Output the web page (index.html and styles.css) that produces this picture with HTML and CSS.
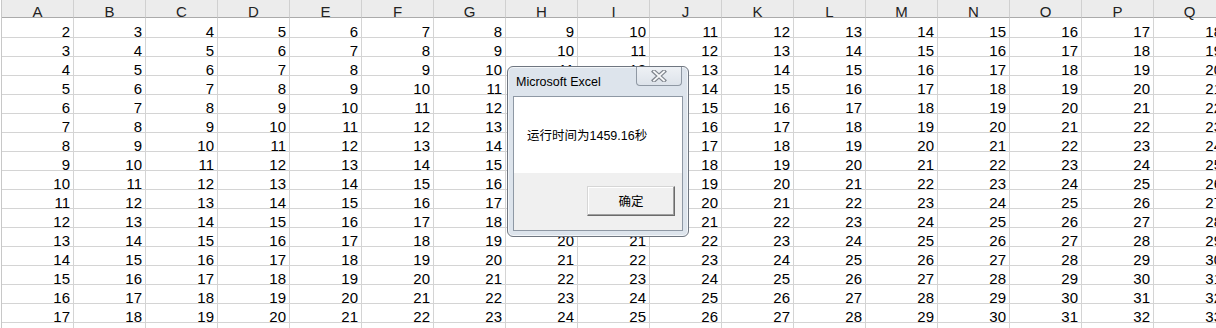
FILE: index.html
```html
<!DOCTYPE html>
<html lang="zh">
<head>
<meta charset="utf-8">
<title>Excel</title>
<link rel="stylesheet" href="styles.css">
</head>
<body>
<div class="sheet">
  <div class="row head"><span>A</span><span>B</span><span>C</span><span>D</span><span>E</span><span>F</span><span>G</span><span>H</span><span>I</span><span>J</span><span>K</span><span>L</span><span>M</span><span>N</span><span>O</span><span>P</span><span>Q</span></div>
  <div class="row first"><span>2</span><span>3</span><span>4</span><span>5</span><span>6</span><span>7</span><span>8</span><span>9</span><span>10</span><span>11</span><span>12</span><span>13</span><span>14</span><span>15</span><span>16</span><span>17</span><span>18</span></div>
  <div class="row"><span>3</span><span>4</span><span>5</span><span>6</span><span>7</span><span>8</span><span>9</span><span>10</span><span>11</span><span>12</span><span>13</span><span>14</span><span>15</span><span>16</span><span>17</span><span>18</span><span>19</span></div>
  <div class="row"><span>4</span><span>5</span><span>6</span><span>7</span><span>8</span><span>9</span><span>10</span><span>11</span><span>12</span><span>13</span><span>14</span><span>15</span><span>16</span><span>17</span><span>18</span><span>19</span><span>20</span></div>
  <div class="row"><span>5</span><span>6</span><span>7</span><span>8</span><span>9</span><span>10</span><span>11</span><span>12</span><span>13</span><span>14</span><span>15</span><span>16</span><span>17</span><span>18</span><span>19</span><span>20</span><span>21</span></div>
  <div class="row"><span>6</span><span>7</span><span>8</span><span>9</span><span>10</span><span>11</span><span>12</span><span>13</span><span>14</span><span>15</span><span>16</span><span>17</span><span>18</span><span>19</span><span>20</span><span>21</span><span>22</span></div>
  <div class="row"><span>7</span><span>8</span><span>9</span><span>10</span><span>11</span><span>12</span><span>13</span><span>14</span><span>15</span><span>16</span><span>17</span><span>18</span><span>19</span><span>20</span><span>21</span><span>22</span><span>23</span></div>
  <div class="row"><span>8</span><span>9</span><span>10</span><span>11</span><span>12</span><span>13</span><span>14</span><span>15</span><span>16</span><span>17</span><span>18</span><span>19</span><span>20</span><span>21</span><span>22</span><span>23</span><span>24</span></div>
  <div class="row"><span>9</span><span>10</span><span>11</span><span>12</span><span>13</span><span>14</span><span>15</span><span>16</span><span>17</span><span>18</span><span>19</span><span>20</span><span>21</span><span>22</span><span>23</span><span>24</span><span>25</span></div>
  <div class="row"><span>10</span><span>11</span><span>12</span><span>13</span><span>14</span><span>15</span><span>16</span><span>17</span><span>18</span><span>19</span><span>20</span><span>21</span><span>22</span><span>23</span><span>24</span><span>25</span><span>26</span></div>
  <div class="row"><span>11</span><span>12</span><span>13</span><span>14</span><span>15</span><span>16</span><span>17</span><span>18</span><span>19</span><span>20</span><span>21</span><span>22</span><span>23</span><span>24</span><span>25</span><span>26</span><span>27</span></div>
  <div class="row"><span>12</span><span>13</span><span>14</span><span>15</span><span>16</span><span>17</span><span>18</span><span>19</span><span>20</span><span>21</span><span>22</span><span>23</span><span>24</span><span>25</span><span>26</span><span>27</span><span>28</span></div>
  <div class="row"><span>13</span><span>14</span><span>15</span><span>16</span><span>17</span><span>18</span><span>19</span><span>20</span><span>21</span><span>22</span><span>23</span><span>24</span><span>25</span><span>26</span><span>27</span><span>28</span><span>29</span></div>
  <div class="row"><span>14</span><span>15</span><span>16</span><span>17</span><span>18</span><span>19</span><span>20</span><span>21</span><span>22</span><span>23</span><span>24</span><span>25</span><span>26</span><span>27</span><span>28</span><span>29</span><span>30</span></div>
  <div class="row"><span>15</span><span>16</span><span>17</span><span>18</span><span>19</span><span>20</span><span>21</span><span>22</span><span>23</span><span>24</span><span>25</span><span>26</span><span>27</span><span>28</span><span>29</span><span>30</span><span>31</span></div>
  <div class="row"><span>16</span><span>17</span><span>18</span><span>19</span><span>20</span><span>21</span><span>22</span><span>23</span><span>24</span><span>25</span><span>26</span><span>27</span><span>28</span><span>29</span><span>30</span><span>31</span><span>32</span></div>
  <div class="row"><span>17</span><span>18</span><span>19</span><span>20</span><span>21</span><span>22</span><span>23</span><span>24</span><span>25</span><span>26</span><span>27</span><span>28</span><span>29</span><span>30</span><span>31</span><span>32</span><span>33</span></div>
  <div class="row"><span></span><span></span><span></span><span></span><span></span><span></span><span></span><span></span><span></span><span></span><span></span><span></span><span></span><span></span><span></span><span></span><span></span></div>
</div>

<div class="dlg">
  <div class="titlebar">
    <span class="title">Microsoft Excel</span>
    <span class="close"><svg width="16" height="12" viewBox="0 0 16 12"><path d="M3 1.5 L13 10.5 M13 1.5 L3 10.5" stroke="#80868e" stroke-width="4.2" stroke-linecap="square" fill="none"/><path d="M3 1.5 L13 10.5 M13 1.5 L3 10.5" stroke="#f7f8f9" stroke-width="1.8" stroke-linecap="square" fill="none"/></svg></span>
  </div>
  <div class="client">
    <div class="msg">运行时间为1459.16秒</div>
    <div class="footer"><span class="ok">确定</span></div>
  </div>
</div>
</body>
</html>
```

FILE: styles.css
```css
* { box-sizing: border-box; margin: 0; padding: 0; }

body {
  width: 1216px;
  height: 328px;
  overflow: hidden;
  background: #ffffff;
  font-family: "Liberation Sans", Arial, sans-serif;
  position: relative;
}

.sheet {
  margin-left: 1px;
  width: 1225px;
  border-left: 1px solid #c8c8c8;
}

.row {
  display: grid;
  grid-template-columns: repeat(17, 72px);
}

.row span {
  height: 19px;
  border-right: 1px solid #d4d4d4;
  border-bottom: 1px solid #d4d4d4;
  text-align: right;
  padding-right: 3px;
  font-size: 15px;
  line-height: 26px;
  color: #000;
  white-space: nowrap;
  overflow: visible;
}

.row.first span {
  height: 20px;
  line-height: 28px;
}

.row.head span {
  height: 18px;
  background: #ececec;
  border-right: 1px solid #d0d0d0;
  border-bottom: 1px solid #ababab;
  text-align: center;
  padding-right: 0;
  line-height: 24px;
  color: #222;
}

/* dialog */
.dlg {
  position: absolute;
  left: 507px;
  top: 66px;
  width: 182px;
  height: 171px;
  border: 1px solid #6f7680;
  border-radius: 6px;
  background: #dde4ec;
  box-shadow: inset 0 0 0 1px #f3f6f9;
  font-family: "Liberation Sans", "Noto Sans CJK SC", sans-serif;
}

.titlebar {
  height: 29px;
  display: flex;
  align-items: flex-start;
}

.title {
  padding-left: 8px;
  padding-top: 8px;
  font-size: 12.5px;
  line-height: 14px;
  color: #000;
}

.close {
  margin-left: auto;
  margin-right: 6px;
  width: 46px;
  height: 19px;
  border: 1px solid #8f98a3;
  border-top: none;
  border-radius: 0 0 4px 4px;
  background: linear-gradient(#eef1f5, #dde3ea);
  display: flex;
  align-items: center;
  justify-content: center;
}

.close svg { display: block; }

.client {
  margin: 0 5px;
  height: 135px;
  border: 1px solid #8e98a4;
  background: #ffffff;
  display: flex;
  flex-direction: column;
}

.msg {
  height: 76px;
  padding-left: 13px;
  padding-top: 31px;
  font-size: 12.5px;
  line-height: 16px;
  color: #000;
  font-family: "Liberation Sans", "Noto Sans CJK SC", sans-serif;
}

.footer {
  flex: 1;
  background: #f0f0f0;
  display: flex;
  justify-content: flex-end;
  align-items: flex-start;
  padding: 13px 7px 0 0;
}

.ok {
  width: 88px;
  height: 30px;
  border: 1px solid;
  border-color: #d6d6d6 #6b6b6b #6b6b6b #d6d6d6;
  box-shadow: inset -1px -1px 0 #a0a0a0, inset 1px 1px 0 #ffffff;
  background: #f0f0f0;
  font-size: 12.5px;
  line-height: 28px;
  text-align: center;
  color: #000;
  font-family: "Noto Sans CJK SC", sans-serif;
}
```
